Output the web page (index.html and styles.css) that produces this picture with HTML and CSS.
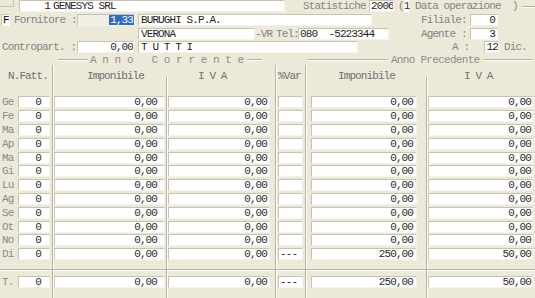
FILE: index.html
```html
<!DOCTYPE html>
<html lang="it">
<head>
  <meta charset="UTF-8">
  <title>Statistiche fornitore</title>
  <link rel="stylesheet" href="styles.css">
</head>
<body>
  <div class="form">
    <div class="top">
      <div class="line">
        <span class="corner"></span>
        <span class="fld w-ditta"><span class="code">1</span>GENESYS SRL</span>
        <span class="lbl l-stat">Statistiche</span>
        <span class="fld w-anno">2006</span>
        <span class="lbl l-dataop">(<span class="mini">1</span> Data operazione  )</span>
        <span class="rule"></span>
      </div>
      <div class="line">
        <span class="fld w-flag">F</span>
        <span class="lbl l-forn">Fornitore :</span>
        <span class="fld off w-cod"><span class="sel">1,33</span></span>
        <span class="fld w-rag">BURUGHI S.P.A.</span>
        <span class="lbl l-fil">Filiale:</span>
        <span class="fld w-num">0</span>
      </div>
      <div class="line">
        <span class="fld w-citta">VERONA</span>
        <span class="lbl l-prov">-VR</span>
        <span class="lbl l-tel">Tel:</span>
        <span class="fld w-tel">080  -5223344</span>
        <span class="lbl l-age">Agente :</span>
        <span class="fld w-num">3</span>
      </div>
      <div class="line">
        <span class="lbl l-contro">Contropart. :</span>
        <span class="fld w-cp">0,00</span>
        <span class="fld w-tutti">T U T T I</span>
        <span class="lbl l-a">A :</span>
        <span class="fld w-mese">12</span>
        <span class="lbl l-dic">Dic.</span>
      </div>
    </div>

    <div class="groups">
      <span class="group g-cur">Anno Corrente</span>
      <span class="group g-prev">Anno Precedente</span>
    </div>

    <div class="grid hdr">
      <div class="cell c-nf">N.Fatt.</div>
      <div class="cell s c-imp">Imponibile</div>
      <div class="cell late c-iva">I V A</div>
      <div class="cell s c-var">%Var</div>
      <div class="cell s c-imp2">Imponibile</div>
      <div class="cell late c-iva2">I V A</div>
    </div>

    <div class="grid row"><div class="cell m">Ge</div><div class="cell c-nf"><span class="fld">0</span></div><div class="cell s c-imp"><span class="fld">0,00</span></div><div class="cell s c-iva"><span class="fld">0,00</span></div><div class="cell s c-var"><span class="fld"></span></div><div class="cell s c-imp2"><span class="fld">0,00</span></div><div class="cell s c-iva2"><span class="fld">0,00</span></div></div>
    <div class="grid row"><div class="cell m">Fe</div><div class="cell c-nf"><span class="fld">0</span></div><div class="cell s c-imp"><span class="fld">0,00</span></div><div class="cell s c-iva"><span class="fld">0,00</span></div><div class="cell s c-var"><span class="fld"></span></div><div class="cell s c-imp2"><span class="fld">0,00</span></div><div class="cell s c-iva2"><span class="fld">0,00</span></div></div>
    <div class="grid row"><div class="cell m">Ma</div><div class="cell c-nf"><span class="fld">0</span></div><div class="cell s c-imp"><span class="fld">0,00</span></div><div class="cell s c-iva"><span class="fld">0,00</span></div><div class="cell s c-var"><span class="fld"></span></div><div class="cell s c-imp2"><span class="fld">0,00</span></div><div class="cell s c-iva2"><span class="fld">0,00</span></div></div>
    <div class="grid row"><div class="cell m">Ap</div><div class="cell c-nf"><span class="fld">0</span></div><div class="cell s c-imp"><span class="fld">0,00</span></div><div class="cell s c-iva"><span class="fld">0,00</span></div><div class="cell s c-var"><span class="fld"></span></div><div class="cell s c-imp2"><span class="fld">0,00</span></div><div class="cell s c-iva2"><span class="fld">0,00</span></div></div>
    <div class="grid row"><div class="cell m">Ma</div><div class="cell c-nf"><span class="fld">0</span></div><div class="cell s c-imp"><span class="fld">0,00</span></div><div class="cell s c-iva"><span class="fld">0,00</span></div><div class="cell s c-var"><span class="fld"></span></div><div class="cell s c-imp2"><span class="fld">0,00</span></div><div class="cell s c-iva2"><span class="fld">0,00</span></div></div>
    <div class="grid row"><div class="cell m">Gi</div><div class="cell c-nf"><span class="fld">0</span></div><div class="cell s c-imp"><span class="fld">0,00</span></div><div class="cell s c-iva"><span class="fld">0,00</span></div><div class="cell s c-var"><span class="fld"></span></div><div class="cell s c-imp2"><span class="fld">0,00</span></div><div class="cell s c-iva2"><span class="fld">0,00</span></div></div>
    <div class="grid row"><div class="cell m">Lu</div><div class="cell c-nf"><span class="fld">0</span></div><div class="cell s c-imp"><span class="fld">0,00</span></div><div class="cell s c-iva"><span class="fld">0,00</span></div><div class="cell s c-var"><span class="fld"></span></div><div class="cell s c-imp2"><span class="fld">0,00</span></div><div class="cell s c-iva2"><span class="fld">0,00</span></div></div>
    <div class="grid row"><div class="cell m">Ag</div><div class="cell c-nf"><span class="fld">0</span></div><div class="cell s c-imp"><span class="fld">0,00</span></div><div class="cell s c-iva"><span class="fld">0,00</span></div><div class="cell s c-var"><span class="fld"></span></div><div class="cell s c-imp2"><span class="fld">0,00</span></div><div class="cell s c-iva2"><span class="fld">0,00</span></div></div>
    <div class="grid row"><div class="cell m">Se</div><div class="cell c-nf"><span class="fld">0</span></div><div class="cell s c-imp"><span class="fld">0,00</span></div><div class="cell s c-iva"><span class="fld">0,00</span></div><div class="cell s c-var"><span class="fld"></span></div><div class="cell s c-imp2"><span class="fld">0,00</span></div><div class="cell s c-iva2"><span class="fld">0,00</span></div></div>
    <div class="grid row"><div class="cell m">Ot</div><div class="cell c-nf"><span class="fld">0</span></div><div class="cell s c-imp"><span class="fld">0,00</span></div><div class="cell s c-iva"><span class="fld">0,00</span></div><div class="cell s c-var"><span class="fld"></span></div><div class="cell s c-imp2"><span class="fld">0,00</span></div><div class="cell s c-iva2"><span class="fld">0,00</span></div></div>
    <div class="grid row"><div class="cell m">No</div><div class="cell c-nf"><span class="fld">0</span></div><div class="cell s c-imp"><span class="fld">0,00</span></div><div class="cell s c-iva"><span class="fld">0,00</span></div><div class="cell s c-var"><span class="fld"></span></div><div class="cell s c-imp2"><span class="fld">0,00</span></div><div class="cell s c-iva2"><span class="fld">0,00</span></div></div>
    <div class="grid row"><div class="cell m">Di</div><div class="cell c-nf"><span class="fld">0</span></div><div class="cell s c-imp"><span class="fld">0,00</span></div><div class="cell s c-iva"><span class="fld">0,00</span></div><div class="cell s c-var"><span class="fld">---</span></div><div class="cell s c-imp2"><span class="fld">250,00</span></div><div class="cell s c-iva2"><span class="fld">50,00</span></div></div>

    <div class="grid gap1">
      <div class="cell"></div><div class="cell"></div><div class="cell s"></div><div class="cell s"></div><div class="cell s"></div><div class="cell s"></div><div class="cell s"></div>
    </div>
    <div class="grid gap2">
      <div class="cell"></div><div class="cell"></div><div class="cell s"></div><div class="cell s"></div><div class="cell s"></div><div class="cell s"></div><div class="cell s"></div>
    </div>

    <div class="grid row tot"><div class="cell m">T.</div><div class="cell c-nf"><span class="fld">0</span></div><div class="cell s c-imp"><span class="fld">0,00</span></div><div class="cell s c-iva"><span class="fld">0,00</span></div><div class="cell s c-var"><span class="fld">---</span></div><div class="cell s c-imp2"><span class="fld">250,00</span></div><div class="cell s c-iva2"><span class="fld">50,00</span></div></div>

    <div class="grid foot">
      <div class="cell"></div><div class="cell"></div><div class="cell s"></div><div class="cell s"></div><div class="cell s"></div><div class="cell s"></div><div class="cell s"></div>
    </div>
  </div>
</body>
</html>
```

FILE: styles.css
```css
html, body {
  margin: 0;
  padding: 0;
  width: 535px;
  height: 298px;
  overflow: hidden;
  background-color: #ece9d8;
  font-family: "Liberation Mono", "Courier New", monospace;
  font-size: 11px;
  letter-spacing: -0.9px;
  color: #1e1e1e;
}
.form {
  width: 535px;
}

/* testata */
.line {
  display: flex;
  align-items: flex-start;
  height: 13.75px;
}
.fld {
  display: block;
  box-sizing: border-box;
  height: 12px;
  line-height: 10px;
  background-color: #fff;
  border: 1px solid;
  border-color: #c6c3b3 #f4f3ec #f4f3ec #c6c3b3;
  white-space: pre;
  overflow: hidden;
}
.fld.off {
  background-color: #f1efe4;
  text-align: right;
}
.sel {
  display: inline-block;
  background-color: #316ac5;
  color: #fff;
  padding: 0 1px;
}
.lbl {
  display: block;
  line-height: 12px;
  color: #848484;
  white-space: pre;
}
.corner {
  width: 13px;
  height: 6px;
  border-right: 1px solid #c9c6b7;
  border-bottom: 1px solid #c9c6b7;
  margin-right: 5px;
}
.w-ditta { width: 266px; }
.code {
  display: inline-block;
  width: 30px;
  text-align: right;
  margin-right: 3px;
}
.l-stat { margin-left: 18px; width: 66px; }
.w-anno { width: 25px; padding-left: 1px; }
.l-dataop { margin-left: 4px; }
.mini { background-color: #fff; color: #333; }
.rule {
  flex: 1;
  margin: 6px 0 0 4px;
  border-top: 1px solid #b5b2a3;
  border-bottom: 1px solid #fff;
}

.w-flag { margin-left: 1px; width: 9px; padding-left: 1px; color: #000; }
.l-forn { margin-left: 4px; width: 63px; }
.w-cod { width: 58px; }
.w-rag { margin-left: 3px; width: 234px; padding-left: 2px; }
.l-fil { margin-left: 49px; width: 49px; }
.w-num { width: 28px; text-align: right; padding-right: 2px; }

.w-citta { margin-left: 138px; width: 117px; padding-left: 2px; }
.l-prov { width: 21px; }
.l-tel { width: 22px; }
.w-tel { width: 91px; padding-left: 1px; }
.l-age { margin-left: 32px; width: 49px; }

.l-contro { margin-left: 2px; width: 75px; }
.w-cp { width: 57px; text-align: right; }
.w-tutti { margin-left: 4px; width: 220px; padding-left: 2px; }
.l-a { margin-left: 94px; width: 32px; }
.w-mese { width: 15px; text-align: right; }
.l-dic { margin-left: 5px; }

/* titoli dei gruppi */
.groups {
  display: flex;
  align-items: center;
  height: 10px;
  color: #8c8c8c;
}
.group {
  display: flex;
  align-items: center;
  line-height: 10px;
  white-space: pre;
}
.group::before,
.group::after {
  content: "";
  height: 0;
  border-top: 1px solid #b5b2a3;
  border-bottom: 1px solid #fff;
}
.g-cur {
  margin-left: 58px;
  letter-spacing: 5.7px;
}
.g-cur::before { width: 30px; margin-right: 2px; }
.g-cur::after { width: 15px; margin-left: -3px; }
.g-prev {
  flex: 1;
  margin-left: 45px;
  letter-spacing: -0.7px;
}
.g-prev::before { width: 81px; margin-right: 3px; }
.g-prev::after { flex: 1; margin: 0 2px 0 4px; }

/* griglia mensile */
.grid {
  display: grid;
  grid-template-columns: 18px 34px 114px 109px 30px 121px 109px;
}
.cell {
  box-sizing: border-box;
}
.cell.s {
  border-left: 1px solid #b5b2a3;
  box-shadow: inset 1px 0 #fff;
}
.hdr {
  height: 30.4px;
  color: #6e6e6e;
}
.hdr .cell {
  padding-top: 6px;
  line-height: 10px;
  white-space: pre;
}
.hdr .c-nf { grid-column: 1 / 3; padding-left: 8px; }
.hdr .c-imp { padding-left: 34px; }
.hdr .c-iva { padding-left: 32px; }
.hdr .c-var { padding-left: 2px; }
.hdr .c-imp2 { padding-left: 32px; }
.hdr .c-iva2 { padding-left: 38px; }
.hdr .late {
  background-image: linear-gradient(#b5b2a3, #b5b2a3), linear-gradient(#fff, #fff);
  background-size: 1px 18px, 1px 18px;
  background-position: 0 100%, 1px 100%;
  background-repeat: no-repeat;
}

.row {
  height: 13.8px;
}
.row .fld {
  margin-top: 1px;
  color: #2a2a2a;
}
.m {
  padding-left: 2px;
  padding-top: 1px;
  line-height: 12px;
  color: #8a8a8a;
}
.c-nf .fld { width: 32px; text-align: right; padding-right: 8px; }
.c-imp .fld { margin-left: 1px; width: 111px; text-align: right; padding-right: 7px; }
.c-iva .fld { margin-left: 1px; width: 102px; text-align: right; padding-right: 2px; }
.c-var .fld { margin-left: 2px; width: 25px; padding-left: 1px; }
.c-imp2 .fld { margin-left: 5px; width: 106px; text-align: right; padding-right: 3px; }
.c-iva2 .fld { margin-left: 1px; width: 105px; text-align: right; padding-right: 1px; }

.gap1 { height: 7.8px; }
.gap2 {
  height: 5px;
  border-top: 1px solid #b5b2a3;
  border-bottom: 0;
  box-shadow: inset 0 1px #fff;
}
.tot { height: 14px; }
.foot { height: 12px; }
```
